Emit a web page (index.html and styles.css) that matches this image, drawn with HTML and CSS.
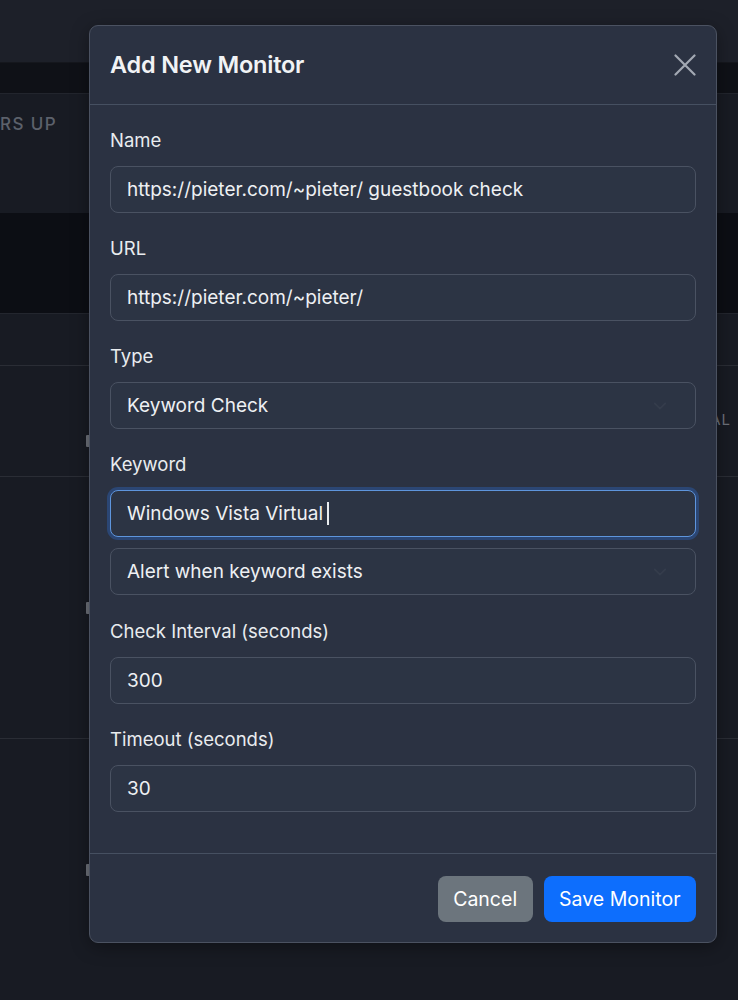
FILE: index.html
```html
<!DOCTYPE html>
<html lang="en">
<head>
<meta charset="utf-8">
<title>Add New Monitor</title>
<link rel="stylesheet" href="styles.css">
</head>
<body>
<div class="page">
  <div class="nav"></div>
  <div class="band"></div>
  <div class="stats"><span class="stat-label">RS UP</span></div>
  <div class="band2"></div>
  <div class="row row-short"></div>
  <div class="row row-head"><span class="mark"></span><span class="head-right">AL</span></div>
  <div class="row row-tall"><span class="mark"></span></div>
  <div class="row row-last"><span class="mark"></span></div>
</div>

<div class="modal">
  <div class="modal-header">
    <h2 class="modal-title">Add New Monitor</h2>
    <button class="close" aria-label="Close">
      <svg viewBox="0 0 22 22" width="22" height="22"><path d="M1.5 1.5 L20.5 20.5 M20.5 1.5 L1.5 20.5" stroke="#a3a9b3" stroke-width="2.2" stroke-linecap="round" fill="none"/></svg>
    </button>
  </div>
  <div class="modal-body">
    <div class="group">
      <label class="label">Name</label>
      <div class="input">https://pieter.com/~pieter/ guestbook check</div>
    </div>
    <div class="group">
      <label class="label">URL</label>
      <div class="input">https://pieter.com/~pieter/</div>
    </div>
    <div class="group">
      <label class="label">Type</label>
      <div class="input select">Keyword Check<svg class="chev" viewBox="0 0 16 16" width="14" height="14"><path d="M2 5l6 6 6-6" stroke="#353d4c" stroke-width="2" fill="none" stroke-linecap="round" stroke-linejoin="round"/></svg></div>
    </div>
    <div class="group group-keyword">
      <label class="label">Keyword</label>
      <div class="input focus">Windows Vista Virtual<span class="caret"></span></div>
      <div class="input select sub">Alert when keyword exists<svg class="chev" viewBox="0 0 16 16" width="14" height="14"><path d="M2 5l6 6 6-6" stroke="#353d4c" stroke-width="2" fill="none" stroke-linecap="round" stroke-linejoin="round"/></svg></div>
    </div>
    <div class="group">
      <label class="label">Check Interval (seconds)</label>
      <div class="input">300</div>
    </div>
    <div class="group">
      <label class="label">Timeout (seconds)</label>
      <div class="input">30</div>
    </div>
  </div>
  <div class="modal-footer">
    <button class="btn btn-secondary">Cancel</button>
    <button class="btn btn-primary">Save Monitor</button>
  </div>
</div>
</body>
</html>
```

FILE: styles.css
```css
* { box-sizing: border-box; }
html, body { margin: 0; padding: 0; }
body {
  width: 738px;
  height: 1000px;
  overflow: hidden;
  background: #181b23;
  font-family: Inter, "Noto Sans", "Liberation Sans", sans-serif;
  color: #e9ecef;
}
.page { display: flex; flex-direction: column; }
.nav { height: 62px; background: #1d2029; }
.band { height: 31px; background: #0f1117; border-top: 1px solid #15171d; }
.stats {
  height: 120px;
  background: #181b23;
  border-top: 1px solid #22252d;
  padding-top: 20px;
}
.stat-label {
  display: block;
  margin-left: 0;
  font-size: 17px;
  letter-spacing: 1.4px;
  font-weight: 500;
  color: #5c616b;
}
.band2 { height: 100px; background: #0c0e14; }
.row { background: #181b23; border-bottom: 1px solid #2a2d35; display: flex; }
.row-short { height: 53px; border-top: 1px solid #23262e; }
.row-head { height: 111px; align-items: center; justify-content: space-between; }
.row-tall { height: 262px; align-items: center; }
.row-last { height: 263px; border-bottom: none; align-items: center; }
.mark {
  display: block;
  width: 4px;
  height: 12px;
  margin-left: 86px;
  background: #6d717a;
  border-radius: 1px;
}
.row-head .mark { margin-top: 40px; }
.row-tall .mark { margin-top: 0; }
.row-last .mark { margin-top: -2px; }
.head-right {
  font-size: 15px;
  letter-spacing: 1px;
  color: #6d717a;
  margin-right: 7px;
  margin-top: -3px;
}

.modal {
  position: absolute;
  top: 25px;
  left: 89px;
  width: 628px;
  background: #2b3242;
  border: 1px solid #4b5261;
  border-radius: 9px;
  box-shadow: 0 4px 18px rgba(0,0,0,0.35);
}
.modal-header {
  display: flex;
  align-items: center;
  justify-content: space-between;
  padding: 20px 20px;
  border-bottom: 1px solid #465061;
}
.modal-title {
  margin: 0;
  font-size: 23.5px;
  line-height: 38px;
  font-weight: 600;
  color: #f1f3f5;
  letter-spacing: -0.2px;
}
.close {
  background: none;
  border: none;
  padding: 0;
  width: 22px;
  height: 22px;
  display: flex;
}
.modal-body { padding: 20px 20px 21px; }
.group { margin-bottom: 20px; }
.label {
  display: block;
  font-size: 18.5px;
  line-height: 31px;
  margin-bottom: 10px;
  color: #e9ecef;
}
.input {
  height: 47px;
  border: 1px solid #4a5262;
  border-radius: 8px;
  background: #2c3444;
  padding: 0 16px;
  display: flex;
  align-items: center;
  font-size: 19px;
  color: #eef0f3;
}
.select { justify-content: space-between; }
.chev { margin-right: 12px; }
.input.sub { margin-top: 11px; }
.group-keyword { margin-bottom: 21px; }
.input.focus {
  border-color: #5e95dd;
  box-shadow: 0 0 0 3px rgba(44, 110, 210, 0.35);
}
.caret {
  display: inline-block;
  width: 1.5px;
  height: 23px;
  background: #e9ecef;
  margin-left: 4px;
}
.modal-footer {
  display: flex;
  justify-content: flex-end;
  gap: 11px;
  padding: 22px 20px 20px;
  border-top: 1px solid #465061;
}
.btn {
  height: 46px;
  border: none;
  border-radius: 8px;
  font-family: inherit;
  font-size: 19.5px;
  color: #fff;
  padding: 0 15.5px;
  white-space: nowrap;
}
.btn-secondary { background: #6c757d; }
.btn-primary { background: #0d6efd; }
```
